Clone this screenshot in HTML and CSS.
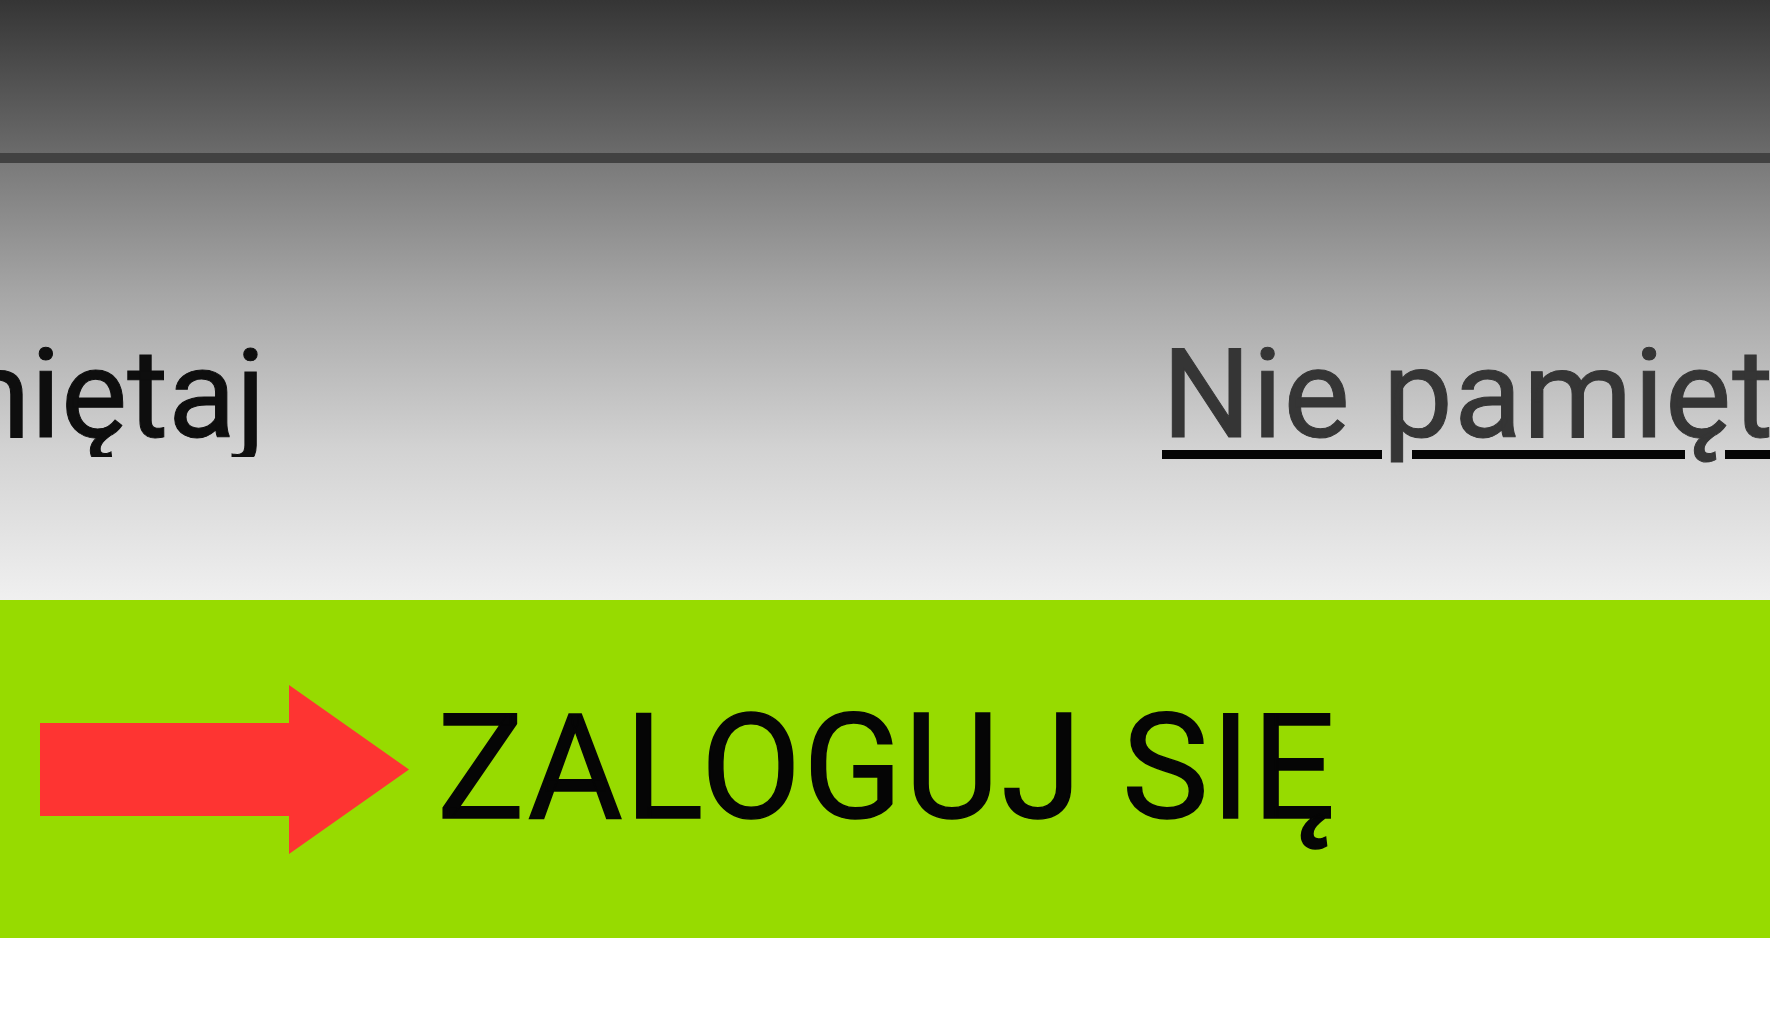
FILE: index.html
```html
<!DOCTYPE html>
<html lang="pl">
<head>
<meta charset="utf-8">
<title>Logowanie</title>
<link rel="stylesheet" href="styles.css">
</head>
<body>
<div class="page">
  <header class="topbar"></header>
  <div class="divider"></div>
  <section class="options">
    <div class="remember"><span class="remember-label">Zapamiętaj</span></div>
    <a class="forgot" href="#">Nie pamiętasz hasła?</a>
  </section>
  <button class="login" type="button">
    <svg class="arrow" width="369" height="169" viewBox="0 0 369 169" aria-hidden="true">
      <path d="M0 38 H249 V0 L369 84.5 L249 169 V131 H0 Z" fill="#fe3432"/>
    </svg>
    <span class="login-text">ZALOGUJ SIĘ</span>
  </button>
</div>
</body>
</html>
```
FILE: styles.css
```css
html, body {
  margin: 0;
  padding: 0;
  background: #ffffff;
  overflow: hidden;
}

.page {
  width: 1770px;
  height: 1026px;
  display: flex;
  flex-direction: column;
  font-family: Roboto, "Liberation Sans", sans-serif;
}

.topbar {
  height: 153px;
  background: linear-gradient(to bottom, #353535 0%, #6b6b6b 100%);
}

.divider {
  height: 10px;
  background: #424242;
}

.options {
  height: 437px;
  box-sizing: border-box;
  padding-top: 169px;
  display: flex;
  align-items: flex-start;
  background: linear-gradient(to bottom, #7a7a7a 0%, #a6a6a6 30%, #d2d2d2 65%, #f0f0f0 100%);
  font-size: 125px;
  line-height: 1;
}

.remember {
  width: 266px;
  overflow: hidden;
  display: flex;
  justify-content: flex-end;
  flex: none;
}

.remember-label {
  white-space: nowrap;
  color: #0e0e0e;
  -webkit-text-stroke: 1px #0e0e0e;
}

.forgot {
  margin-left: 896px;
  white-space: nowrap;
  letter-spacing: 1px;
  color: #353535;
  -webkit-text-stroke: 1px #353535;
  text-decoration: underline;
  text-decoration-color: #050505;
  text-decoration-thickness: 9px;
  text-underline-offset: 13px;
}

.login {
  height: 338px;
  margin: 0;
  padding: 0 0 0 40px;
  border: none;
  background: #97db00;
  display: flex;
  align-items: center;
  gap: 28px;
  font-family: Roboto, "Liberation Sans", sans-serif;
  font-size: 146px;
  line-height: 1;
  letter-spacing: 2px;
  color: #050505;
  -webkit-text-stroke: 1.5px #050505;
  text-align: left;
  width: 100%;
  flex: none;
}

.arrow {
  display: block;
  flex: none;
}

.login-text {
  white-space: nowrap;
}
```
